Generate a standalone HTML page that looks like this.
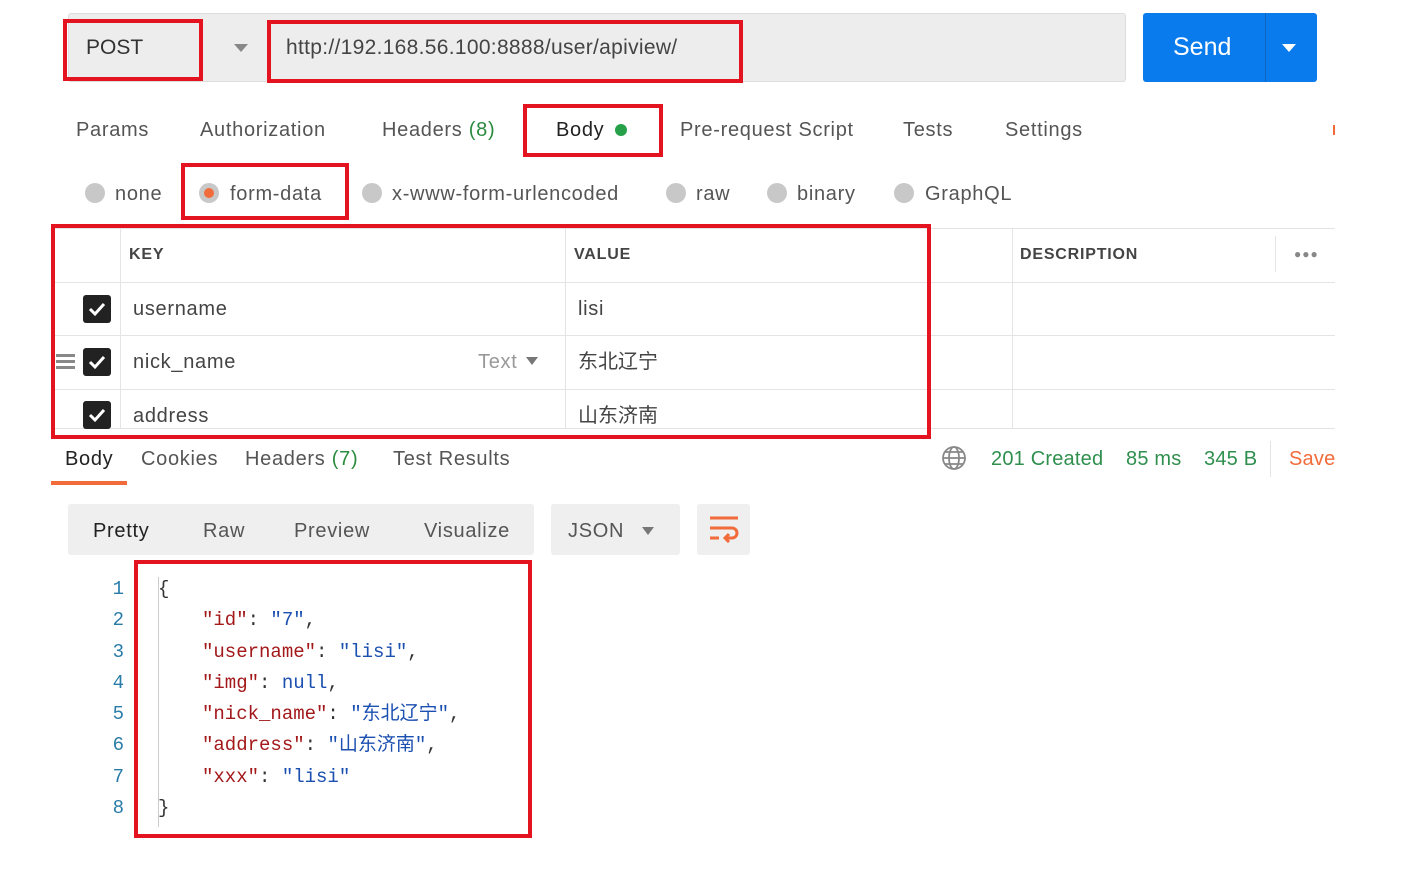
<!DOCTYPE html>
<html><head><meta charset="utf-8"><style>
*{margin:0;padding:0;box-sizing:border-box}
body{width:1412px;height:877px;background:#fff;position:relative;overflow:hidden;font-family:"Liberation Sans","Noto Sans CJK SC",sans-serif;color:#333}
.a{position:absolute;white-space:nowrap;line-height:24px}
.red{position:absolute;border:4px solid #e3141f}
.t{font-size:20px;color:#555;letter-spacing:.7px}
.g{color:#2a8b3e}
.hl{position:absolute;height:1px;background:#e4e4e4}
.vl{position:absolute;width:1px;background:#e4e4e4}
.cb{position:absolute;width:28px;height:28px;background:#222;border-radius:3px}
.cb svg{position:absolute;left:4px;top:5px}
.rad{position:absolute;width:20px;height:20px;border-radius:50%;background:#c8c8c8}
.mono{font-family:"Liberation Mono","Noto Sans CJK SC",monospace;font-size:19px}
.k{color:#a3181a}.s{color:#1b4fb0}
.ln{position:absolute;left:100px;width:24px;text-align:right;color:#2a7ca8;font-size:19px}
</style></head><body>
<div class="a" style="left:68px;top:13px;width:1058px;height:69px;background:#ededed;border:1px solid #ddd;border-radius:3px"></div>
<div class="a" style="left:86px;top:36px;font-size:21px;color:#333">POST</div>
<div class="a" style="left:234px;top:44px;width:0;height:0;border-left:7px solid transparent;border-right:7px solid transparent;border-top:8px solid #888"></div>
<div class="a" style="left:286px;top:36px;font-size:21px;color:#444;letter-spacing:.3px">http://192.168.56.100:8888/user/apiview/</div>
<div class="red" style="left:63px;top:19px;width:140px;height:62px"></div>
<div class="red" style="left:267px;top:20px;width:476px;height:63px"></div>
<div class="a" style="left:1143px;top:13px;width:174px;height:69px;background:#097bed;border-radius:3px"></div>
<div class="a" style="left:1265px;top:13px;width:1px;height:69px;background:#0a64c0"></div>
<div class="a" style="left:1173px;top:35px;font-size:25px;color:#fff">Send</div>
<div class="a" style="left:1282px;top:44px;border-left:7px solid transparent;border-right:7px solid transparent;border-top:8px solid #fff"></div>

<div class="a t" style="left:76px;top:118px">Params</div>
<div class="a t" style="left:200px;top:118px">Authorization</div>
<div class="a t" style="left:382px;top:118px">Headers <span class="g">(8)</span></div>
<div class="a t" style="left:556px;top:118px;color:#222">Body</div>
<div class="a" style="left:615px;top:124px;width:12px;height:12px;border-radius:50%;background:#26a149"></div>
<div class="red" style="left:523px;top:104px;width:140px;height:53px"></div>
<div class="a t" style="left:680px;top:118px">Pre-request Script</div>
<div class="a t" style="left:903px;top:118px">Tests</div>
<div class="a t" style="left:1005px;top:118px">Settings</div>
<div class="a" style="left:1333px;top:125px;width:2px;height:10px;background:#f26b3a"></div>

<div class="rad" style="left:85px;top:183px"></div><div class="a t" style="left:115px;top:182px">none</div>
<div class="rad" style="left:199px;top:183px"></div><div class="a" style="left:204px;top:188px;width:10px;height:10px;border-radius:50%;background:#f26b3a"></div>
<div class="a t" style="left:230px;top:182px">form-data</div>
<div class="red" style="left:181px;top:163px;width:168px;height:57px"></div>
<div class="rad" style="left:362px;top:183px"></div><div class="a t" style="left:392px;top:182px">x-www-form-urlencoded</div>
<div class="rad" style="left:666px;top:183px"></div><div class="a t" style="left:696px;top:182px">raw</div>
<div class="rad" style="left:767px;top:183px"></div><div class="a t" style="left:797px;top:182px">binary</div>
<div class="rad" style="left:894px;top:183px"></div><div class="a t" style="left:925px;top:182px">GraphQL</div>

<div class="hl" style="left:55px;top:228px;width:1280px"></div>
<div class="hl" style="left:55px;top:282px;width:1280px"></div>
<div class="hl" style="left:55px;top:335px;width:1280px"></div>
<div class="hl" style="left:55px;top:389px;width:1280px"></div>
<div class="hl" style="left:55px;top:428px;width:1280px"></div>
<div class="vl" style="left:120px;top:228px;height:200px"></div>
<div class="vl" style="left:565px;top:228px;height:200px"></div>
<div class="vl" style="left:1012px;top:228px;height:200px"></div>
<div class="vl" style="left:1275px;top:236px;height:36px"></div>
<div class="a" style="left:129px;top:243px;font-size:16px;font-weight:bold;color:#444;letter-spacing:.8px">KEY</div>
<div class="a" style="left:574px;top:243px;font-size:16px;font-weight:bold;color:#444;letter-spacing:.8px">VALUE</div>
<div class="a" style="left:1020px;top:243px;font-size:16px;font-weight:bold;color:#444;letter-spacing:.8px">DESCRIPTION</div>
<div class="a" style="left:1294px;top:242px;font-size:12px;color:#888;letter-spacing:1px">●●●</div>
<div class="cb" style="left:83px;top:295px"><svg width="20" height="18"><path d="M3 9l5 5 9-10" stroke="#fff" stroke-width="3" fill="none"/></svg></div>
<div class="cb" style="left:83px;top:348px"><svg width="20" height="18"><path d="M3 9l5 5 9-10" stroke="#fff" stroke-width="3" fill="none"/></svg></div>
<div class="cb" style="left:83px;top:401px"><svg width="20" height="18"><path d="M3 9l5 5 9-10" stroke="#fff" stroke-width="3" fill="none"/></svg></div>
<div class="a" style="left:56px;top:354px;width:19px;height:3px;background:#888;box-shadow:0 6px 0 #888,0 12px 0 #888"></div>
<div class="a t" style="left:133px;top:297px;color:#444">username</div>
<div class="a t" style="left:133px;top:350px;color:#444">nick_name</div>
<div class="a t" style="left:133px;top:404px;color:#444">address</div>
<div class="a t" style="left:478px;top:350px;color:#999">Text</div>
<div class="a" style="left:526px;top:357px;border-left:6px solid transparent;border-right:6px solid transparent;border-top:8px solid #777"></div>
<div class="a t" style="left:578px;top:297px;color:#444">lisi</div>
<div class="a t" style="left:578px;top:350px;color:#444;letter-spacing:0">东北辽宁</div>
<div class="a t" style="left:578px;top:404px;color:#444;letter-spacing:0">山东济南</div>
<div class="red" style="left:51px;top:224px;width:880px;height:215px"></div>

<div class="a t" style="left:65px;top:447px;color:#222">Body</div>
<div class="a" style="left:51px;top:481px;width:76px;height:4px;background:#f26b3a"></div>
<div class="a t" style="left:141px;top:447px">Cookies</div>
<div class="a t" style="left:245px;top:447px">Headers <span class="g">(7)</span></div>
<div class="a t" style="left:393px;top:447px">Test Results</div>
<svg class="a" style="left:941px;top:445px" width="26" height="26" viewBox="0 0 26 26" fill="none" stroke="#888" stroke-width="1.8"><circle cx="13" cy="13" r="11"/><ellipse cx="13" cy="13" rx="5" ry="11"/><path d="M2 13h22M4 7h18M4 19h18"/></svg>
<div class="a t" style="left:991px;top:447px;color:#2f8f4e;letter-spacing:.2px">201 Created</div>
<div class="a t" style="left:1126px;top:447px;color:#2f8f4e;letter-spacing:.2px">85 ms</div>
<div class="a t" style="left:1204px;top:447px;color:#2f8f4e;letter-spacing:.2px">345 B</div>
<div class="vl" style="left:1270px;top:441px;height:36px"></div>
<div class="a t" style="left:1289px;top:447px;color:#f26b3a;letter-spacing:.2px">Save</div>

<div class="a" style="left:68px;top:504px;width:466px;height:51px;background:#efefef;border-radius:3px"></div>
<div class="a t" style="left:93px;top:519px;color:#222">Pretty</div>
<div class="a t" style="left:203px;top:519px">Raw</div>
<div class="a t" style="left:294px;top:519px">Preview</div>
<div class="a t" style="left:424px;top:519px">Visualize</div>
<div class="a" style="left:551px;top:504px;width:129px;height:51px;background:#efefef;border-radius:3px"></div>
<div class="a t" style="left:568px;top:519px">JSON</div>
<div class="a" style="left:642px;top:527px;border-left:6px solid transparent;border-right:6px solid transparent;border-top:8px solid #777"></div>
<div class="a" style="left:697px;top:504px;width:53px;height:51px;background:#efefef;border-radius:3px"></div>
<svg class="a" style="left:709px;top:515px" width="30" height="28" viewBox="0 0 30 28" fill="none" stroke="#f26b3a" stroke-width="3"><path d="M1 3h28M1 13h22a5 5 0 0 1 0 10H16M20 19l-4 4 4 4M1 23h9"/></svg>

<div class="a" style="left:158px;top:577px;width:9px;height:250px;border-left:1px solid #ccc"></div>
<div class="ln mono a" style="top:577px;left:100px">1</div><div class="ln mono a" style="top:608px;left:100px">2</div><div class="ln mono a" style="top:640px;left:100px">3</div><div class="ln mono a" style="top:671px;left:100px">4</div><div class="ln mono a" style="top:702px;left:100px">5</div><div class="ln mono a" style="top:733px;left:100px">6</div><div class="ln mono a" style="top:765px;left:100px">7</div><div class="ln mono a" style="top:796px;left:100px">8</div>
<div class="a mono" style="left:158px;top:577px">{</div>
<div class="a mono" style="left:202px;top:608px"><span class="k">"id"</span>: <span class="s">"7"</span>,</div>
<div class="a mono" style="left:202px;top:640px"><span class="k">"username"</span>: <span class="s">"lisi"</span>,</div>
<div class="a mono" style="left:202px;top:671px"><span class="k">"img"</span>: <span class="s">null</span>,</div>
<div class="a mono" style="left:202px;top:702px"><span class="k">"nick_name"</span>: <span class="s">"东北辽宁"</span>,</div>
<div class="a mono" style="left:202px;top:733px"><span class="k">"address"</span>: <span class="s">"山东济南"</span>,</div>
<div class="a mono" style="left:202px;top:765px"><span class="k">"xxx"</span>: <span class="s">"lisi"</span></div>
<div class="a mono" style="left:158px;top:796px">}</div>
<div class="red" style="left:134px;top:560px;width:398px;height:278px"></div>
</body></html>
